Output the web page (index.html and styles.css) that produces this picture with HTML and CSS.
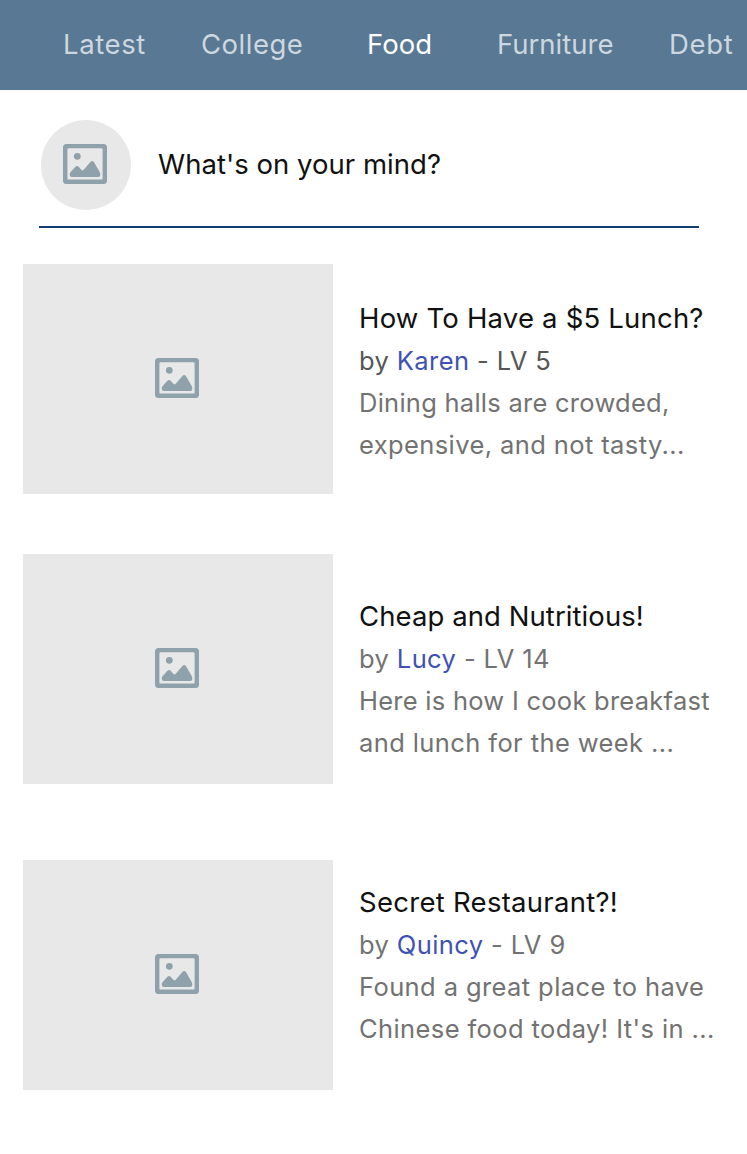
FILE: index.html
```html
<!DOCTYPE html>
<html lang="en">
<head>
<meta charset="utf-8">
<title>Food</title>
<link rel="stylesheet" href="styles.css">
</head>
<body>
<svg class="sprite" width="0" height="0" aria-hidden="true">
  <symbol id="picture" viewBox="0 0 44 40">
    <path d="M3.5 0H40.5Q44 0 44 3.5V36.5Q44 40 40.5 40H3.5Q0 40 0 36.5V3.5Q0 0 3.5 0ZM5.6 4.2Q4.4 4.2 4.4 5.4V34.4Q4.4 35.6 5.6 35.6H38.4Q39.6 35.6 39.6 34.4V5.4Q39.6 4.2 38.4 4.2Z" fill="currentColor" fill-rule="evenodd"/>
    <circle cx="14.3" cy="12.3" r="3.4" fill="currentColor"/>
    <path d="M7.3 28.4 12.4 22.8Q14.1 21.2 15.7 22.8L18.3 25.8Q19.5 27 20.7 25.8L27.4 17.9Q29.3 16.2 30.9 18L36.7 28Q37.3 29.2 37.3 30.3V31Q37.3 33 35.3 33H9Q6.8 33 6.8 31V29.8Q6.8 29 7.3 28.4Z" fill="currentColor"/>
  </symbol>
</svg>
<nav class="tabs">
  <a class="tab tab-latest">Latest</a>
  <a class="tab tab-college">College</a>
  <a class="tab tab-food active">Food</a>
  <a class="tab tab-furniture">Furniture</a>
  <a class="tab tab-debt">Debt</a>
</nav>
<main>
  <section class="composer">
    <div class="avatar"><svg class="picture"><use href="#picture"/></svg></div>
    <span class="prompt">What's on your mind?</span>
  </section>
  <article class="post first">
    <div class="thumb"><svg class="picture"><use href="#picture"/></svg></div>
    <div class="copy">
      <h2>How To Have a $5 Lunch?</h2>
      <p class="byline">by <a>Karen</a> - LV 5</p>
      <p class="excerpt"><span class="snug">Dining halls are crowded,</span><br>expensive, and not tasty...</p>
    </div>
  </article>
  <article class="post second">
    <div class="thumb"><svg class="picture"><use href="#picture"/></svg></div>
    <div class="copy">
      <h2>Cheap and Nutritious!</h2>
      <p class="byline">by <a>Lucy</a> - LV 14</p>
      <p class="excerpt"><span class="snug">Here is how I cook breakfast</span><br>and lunch for the week ...</p>
    </div>
  </article>
  <article class="post third">
    <div class="thumb"><svg class="picture"><use href="#picture"/></svg></div>
    <div class="copy">
      <h2>Secret Restaurant?!</h2>
      <p class="byline">by <a>Quincy</a> - LV 9</p>
      <p class="excerpt">Found a great place to have<br>Chinese food today! It's in ...</p>
    </div>
  </article>
</main>
</body>
</html>
```

FILE: styles.css
```css
* { box-sizing: border-box; }
body {
  margin: 0;
  background: #fff;
  font-family: Inter, "Liberation Sans", sans-serif;
  font-size: 27.5px;
  color: #111;
  overflow: hidden;
}
.sprite { display: block; }
.tabs {
  display: flex;
  height: 90px;
  padding-left: 63px;
  background: #587894;
  line-height: 88px;
  white-space: nowrap;
}
.tab { flex: none; color: #cdd7df; }
.tab-latest { width: 138px; letter-spacing: .6px; }
.tab-college { width: 166px; letter-spacing: .5px; }
.tab-food { width: 130px; }
.tab-furniture { width: 172px; }
.tab-debt { letter-spacing: .7px; }
.tab.active { color: #fff; }
.composer {
  display: flex;
  align-items: center;
  gap: 27px;
  width: 660px;
  height: 138px;
  margin-left: 39px;
  padding: 14px 0 0 2px;
  border-bottom: 2px solid #153e70;
}
.avatar {
  display: flex;
  align-items: center;
  justify-content: center;
  width: 90px;
  height: 90px;
  border-radius: 50%;
  background: #e8e8e8;
}
.picture { display: block; width: 44px; height: 40px; color: #8fa1aa; }
.avatar .picture { margin: 0 2px 2px 0; }
.prompt { padding-bottom: 2px; letter-spacing: .03px; }
.post { display: flex; gap: 26px; height: 230px; margin-left: 23px; }
.first { margin-top: 36px; }
.second { margin-top: 60px; }
.third { margin-top: 76px; }
.thumb {
  display: flex;
  flex: none;
  align-items: center;
  justify-content: center;
  width: 310px;
  background: #e8e8e8;
}
.thumb .picture { margin: 0 2px 2px 0; }
.copy { white-space: nowrap; padding-top: 33px; }
.second .copy { padding-top: 41px; }
.third .copy { padding-top: 21px; }
h2 { margin: 0; font-size: 27.5px; font-weight: 400; line-height: 43px; letter-spacing: .2px; }
.second h2 { letter-spacing: .08px; }
.third h2 { letter-spacing: .28px; }
p { margin: 0; font-size: 25.5px; line-height: 42px; color: #727272; letter-spacing: .4px; }
.snug { letter-spacing: .26px; }
.first .byline { color: #565656; }
.byline a { color: #3f51b5; }
```
